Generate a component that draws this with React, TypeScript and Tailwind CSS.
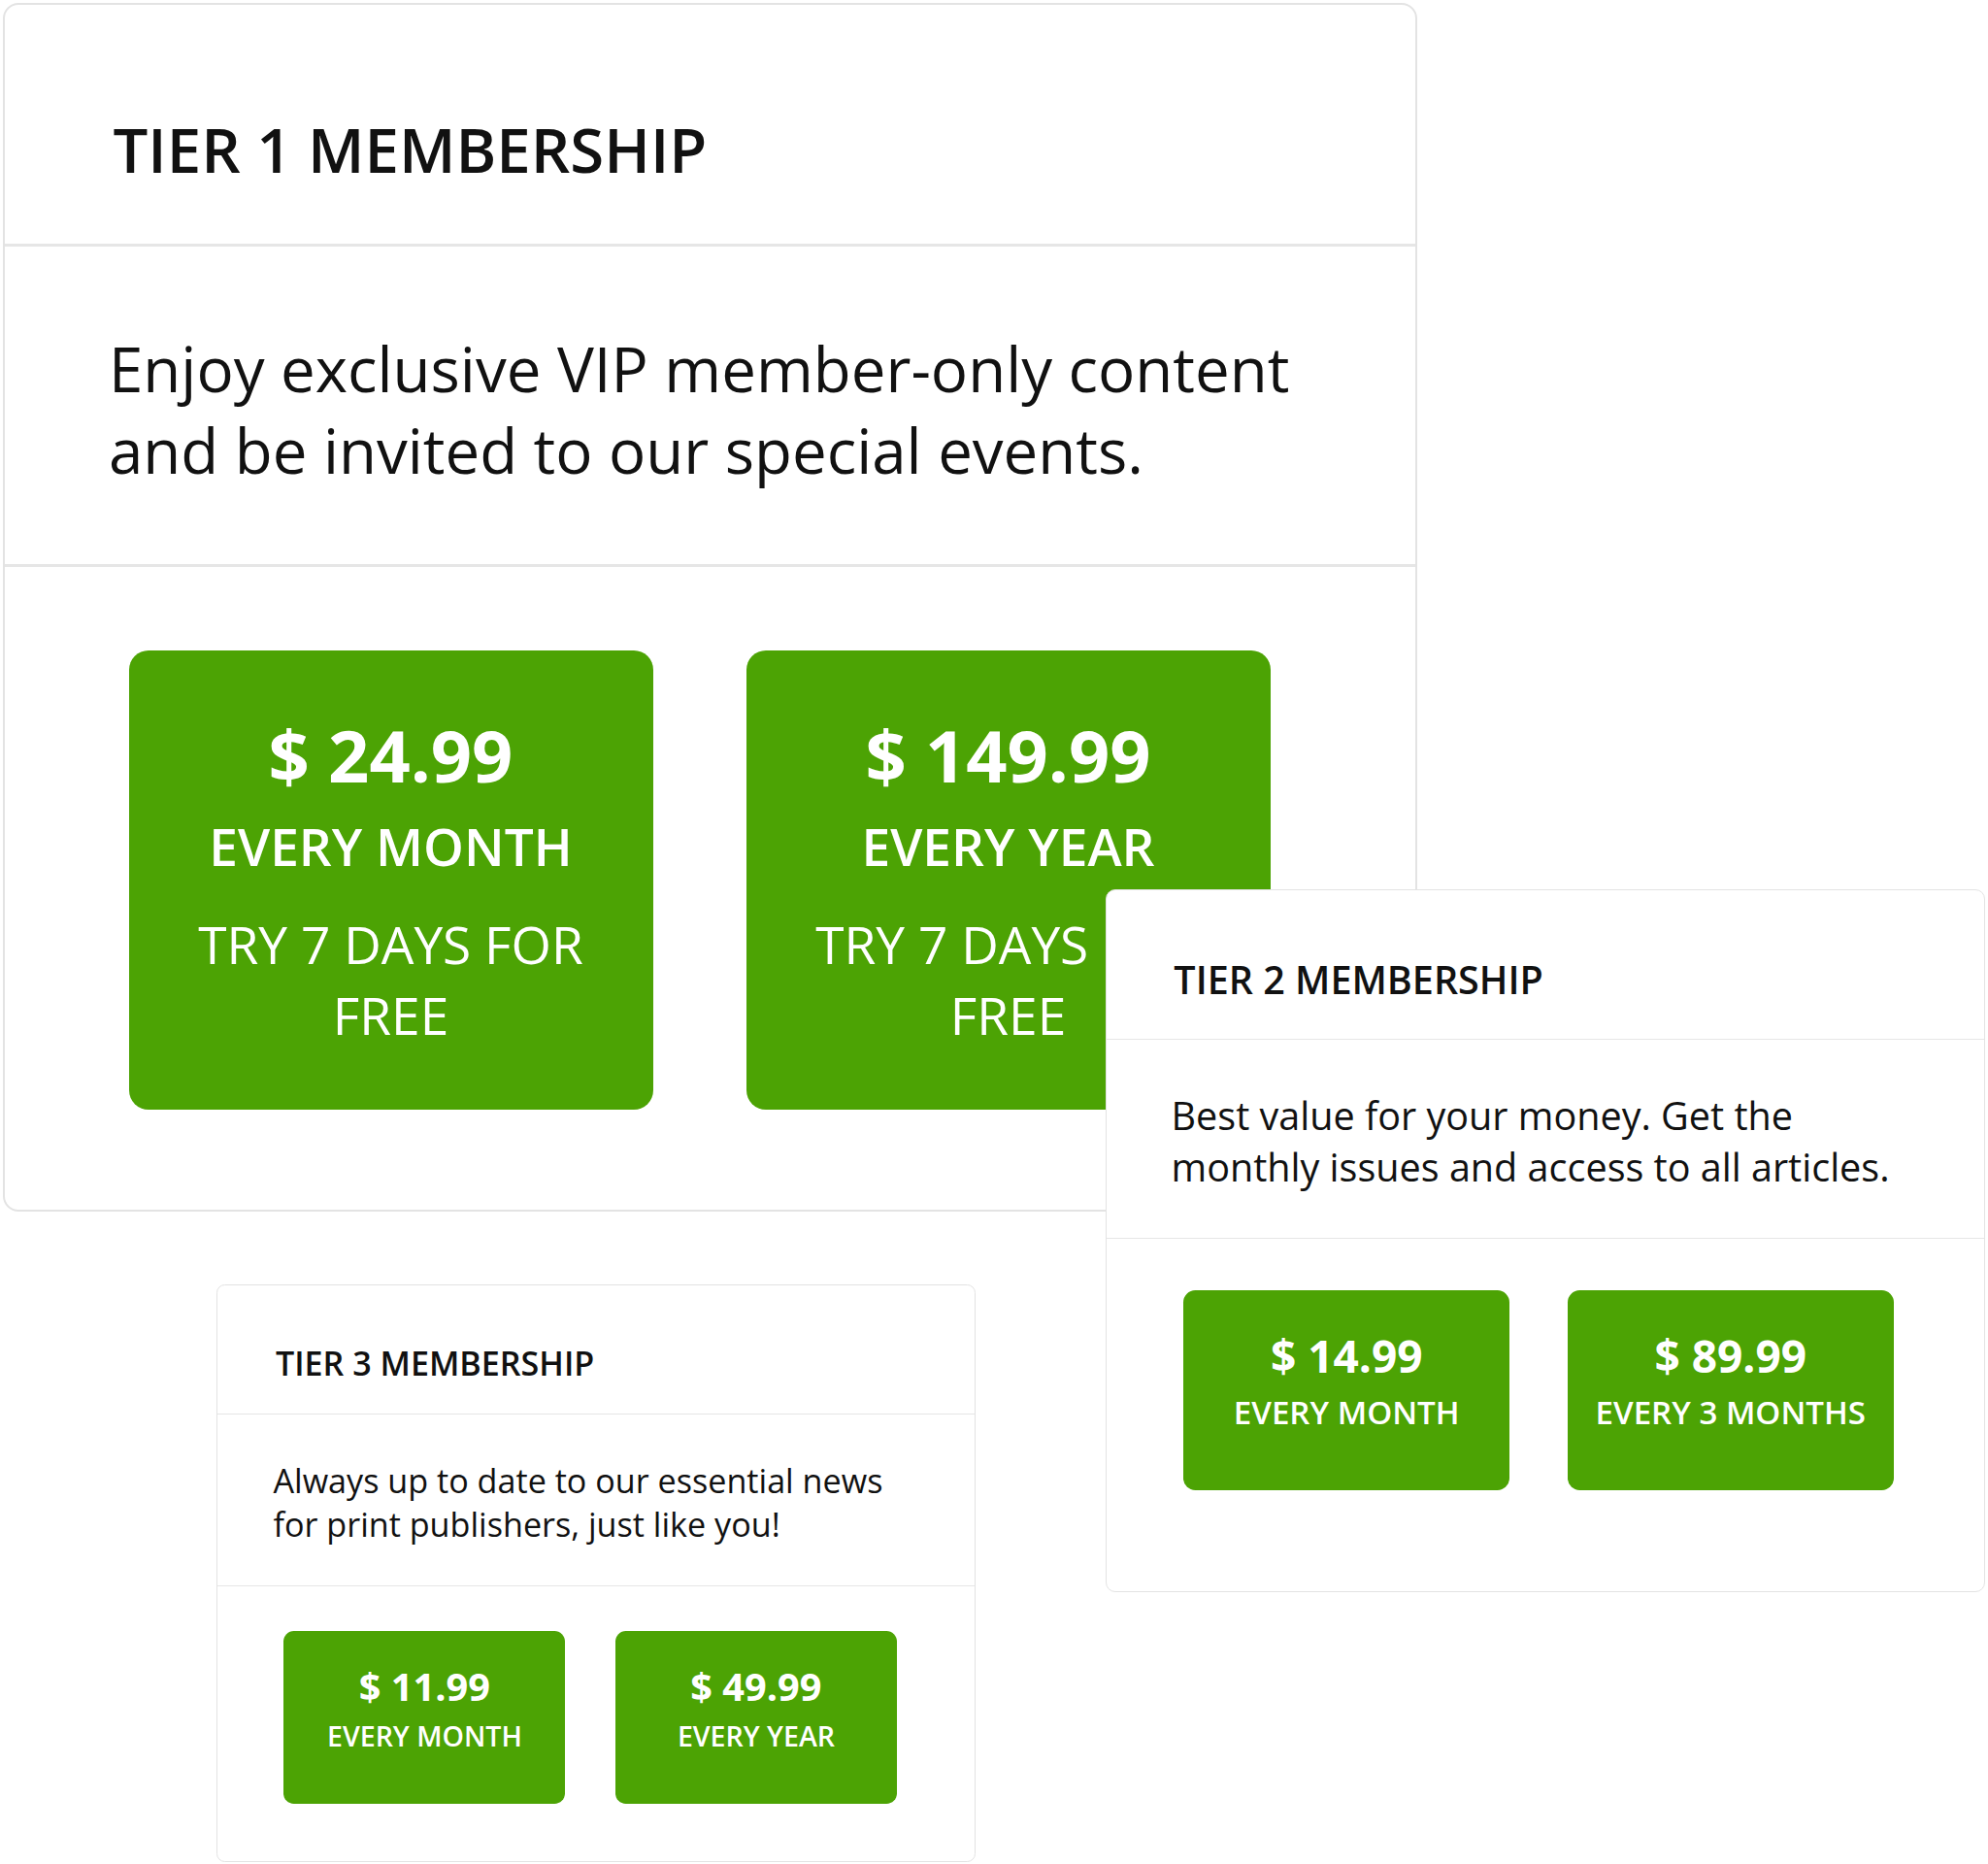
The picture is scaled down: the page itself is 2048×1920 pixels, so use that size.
import React from "react";

type Plan = {
  price: string;
  period: string;
  trial?: boolean;
};

type Tier = {
  title: string;
  description: string;
  plans: Plan[];
  // position + base size of the card; every inner size is in em of this
  frame: string;
  footerPad: string;
};

const tiers: Tier[] = [
  {
    title: "TIER 1 MEMBERSHIP",
    description: "Enjoy exclusive VIP member-only content and be invited to our special events.",
    plans: [
      { price: "$ 24.99", period: "EVERY MONTH", trial: true },
      { price: "$ 149.99", period: "EVERY YEAR", trial: true },
    ],
    frame: "left-[3px] top-[3px] text-[100px]",
    footerPad: "pb-[1.03em]",
  },
  {
    title: "TIER 3 MEMBERSHIP",
    description: "Always up to date to our essential news for print publishers, just like you!",
    plans: [
      { price: "$ 11.99", period: "EVERY MONTH" },
      { price: "$ 49.99", period: "EVERY YEAR" },
    ],
    frame: "left-[223px] top-[1323px] text-[53.7px]",
    footerPad: "pb-[1.1em]",
  },
  {
    title: "TIER 2 MEMBERSHIP",
    description: "Best value for your money. Get the monthly issues and access to all articles.",
    plans: [
      { price: "$ 14.99", period: "EVERY MONTH" },
      { price: "$ 89.99", period: "EVERY 3 MONTHS" },
    ],
    frame: "left-[1139px] top-[916px] text-[62.2px]",
    footerPad: "pb-[1.68em]",
  },
];

function PlanButton({ plan }: { plan: Plan }) {
  return (
    <div
      className={`flex w-[5.4em] flex-col items-center rounded-[0.2em] bg-[#4ca304] px-[0.4em] pt-[0.71em] text-center text-white ${
        plan.trial ? "pb-[0.6em]" : "pb-[1.03em]"
      }`}
    >
      <div className="text-[0.74em] font-bold leading-none">{plan.price}</div>
      <div className="mt-[0.56em] text-[0.532em] font-semibold leading-none">{plan.period}</div>
      {plan.trial && (
        <div className="mt-[0.71em] text-[0.532em] font-normal leading-[1.38]">TRY 7 DAYS FOR FREE</div>
      )}
    </div>
  );
}

function TierCard({ tier }: { tier: Tier }) {
  return (
    <div
      className={`absolute w-[14.57em] overflow-hidden rounded-[0.16em] border-[length:0.025em] border-[#e3e3e3] bg-white text-[#111] ${tier.frame}`}
    >
      {/* Header */}
      <div className="border-b-[length:0.03em] border-[#e6e6e6] pb-[0.54em] pl-[1.115em] pt-[1.06em]">
        <h2 className="text-[0.635em] font-semibold leading-[1.36]">{tier.title}</h2>
      </div>

      {/* Description */}
      <div className="border-b-[length:0.03em] border-[#e6e6e6] pb-[0.75em] pl-[1.07em] pr-[1.1em] pt-[0.84em]">
        <p className="text-[0.636em] leading-[1.32]">{tier.description}</p>
      </div>

      {/* Plans */}
      <div className={`flex items-start gap-[0.96em] pl-[1.275em] pt-[0.86em] ${tier.footerPad}`}>
        {tier.plans.map((plan) => (
          <PlanButton key={plan.price} plan={plan} />
        ))}
      </div>
    </div>
  );
}

export default function App() {
  return (
    <div className="relative h-[1920px] w-[2048px] overflow-hidden bg-white font-['Open_Sans',sans-serif]">
      {tiers.map((tier) => (
        <TierCard key={tier.title} tier={tier} />
      ))}
    </div>
  );
}
